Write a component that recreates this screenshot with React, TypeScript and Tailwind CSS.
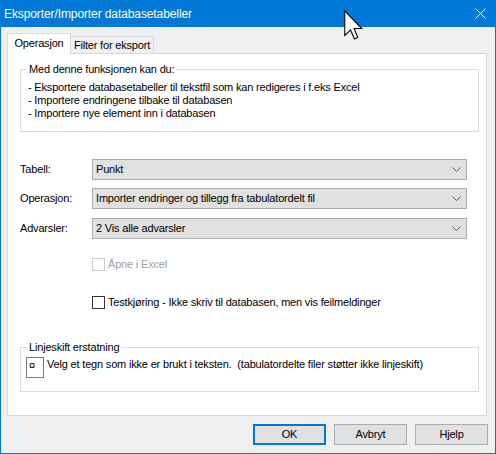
import React from "react";

function Chevron() {
  return (
    <svg width="9" height="6" viewBox="0 0 9 6" className="mr-[5px] shrink-0">
      <path d="M0.5 0.5 L4.5 4.5 L8.5 0.5" fill="none" stroke="#606060" strokeWidth="1" />
    </svg>
  );
}

function Combo({ label, value, className }: { label: string; value: string; className?: string }) {
  return (
    <div className={"flex items-center " + (className ?? "")}>
      <div className="ml-[12px] w-[72px]">{label}</div>
      <div className="w-[375px] h-[21px] bg-[#e1e1e1] border border-[#adadad] flex items-center">
        <span className="pl-[3px] flex-1">{value}</span>
        <Chevron />
      </div>
    </div>
  );
}

export default function App() {
  return (
    <div className="relative w-[496px] h-[454px] bg-[#0078d7] overflow-hidden font-['Liberation_Sans',Arial,sans-serif] text-[11px] leading-[13px] tracking-[-0.18px] text-black">
      {/* Title bar */}
      <div className="h-[27px] flex items-center pl-[4px] pr-[10px] text-white tracking-normal">
        <span className="text-[12px] leading-[16px] tracking-[-0.1px]">Eksporter/Importer databasetabeller</span>
        <svg width="11" height="11" viewBox="0 0 11 11" className="ml-auto">
          <path d="M0.5 0.5 L10.5 10.5 M10.5 0.5 L0.5 10.5" stroke="#ffffff" strokeWidth="1" />
        </svg>
      </div>

      {/* Client area */}
      <div className="mx-[1px] h-[426px] bg-[#f0f0f0] flex flex-col">
        {/* Tabs */}
        <div className="mt-[6px] ml-[6px] h-[20px] flex items-end">
          <div className="relative z-10 -mb-px w-[64px] h-[21px] bg-white border border-b-0 border-[#d9d9d9] flex items-center justify-center pb-[1px]">
            Operasjon
          </div>
          <div className="w-[83px] h-[17px] bg-[#f0f0f0] border border-l-0 border-b-0 border-[#d9d9d9] flex items-center justify-center">
            Filter for eksport
          </div>
        </div>

        {/* Tab page */}
        <div className="ml-[6px] w-[480px] h-[363px] bg-white border border-[#d9d9d9] flex flex-col">
          <fieldset className="mt-[9px] ml-[12px] w-[459px] h-[69px] border border-[#dcdcdc]">
            <legend className="ml-[6px] px-[2px] leading-[13px]">Med denne funksjonen kan du:</legend>
            <div className="pt-[5px] pl-[7px]">
              <div>- Eksportere databasetabeller til tekstfil som kan redigeres i f.eks Excel</div>
              <div>- Importere endringene tilbake til databasen</div>
              <div>- Importere nye element inn i databasen</div>
            </div>
          </fieldset>

          <Combo className="mt-[27px]" label="Tabell:" value="Punkt" />
          <Combo className="mt-[8px]" label="Operasjon:" value="Importer endringer og tillegg fra tabulatordelt fil" />
          <Combo className="mt-[9px]" label="Advarsler:" value="2 Vis alle advarsler" />

          <div className="mt-[19px] ml-[84px] flex items-center h-[13px]">
            <div className="w-[13px] h-[13px] border border-[#cccccc] bg-white" />
            <span className="ml-[3px] text-[#a0a0a0]">Åpne i Excel</span>
          </div>

          <div className="mt-[25px] ml-[84px] flex items-center h-[13px]">
            <div className="w-[13px] h-[13px] border border-[#333333] bg-white" />
            <span className="ml-[3px]">Testkjøring - Ikke skriv til databasen, men vis feilmeldinger</span>
          </div>

          <fieldset className="mt-[32px] ml-[12px] w-[459px] h-[51px] border border-[#dcdcdc]">
            <legend className="ml-[6px] px-[2px] leading-[13px]">Linjeskift erstatning</legend>
            <div className="mt-[3px] pl-[5px] flex items-start">
              <div className="w-[18px] h-[21px] border border-[#7a7a7a] bg-white text-[11px] leading-[13px] pl-[2px] pt-[1px]">¤</div>
              <span className="ml-[3px] mt-[1px] whitespace-pre">Velg et tegn som ikke er brukt i teksten.  (tabulatordelte filer støtter ikke linjeskift)</span>
            </div>
          </fieldset>
        </div>

        {/* Buttons */}
        <div className="mt-[8px] pr-[7px] flex justify-end gap-[8px]">
          <button className="w-[73px] h-[21px] bg-[#e1e1e1] border-2 border-[#0078d7] flex items-center justify-center">OK</button>
          <button className="w-[73px] h-[21px] bg-[#e1e1e1] border border-[#adadad] flex items-center justify-center">Avbryt</button>
          <button className="w-[73px] h-[21px] bg-[#e1e1e1] border border-[#adadad] flex items-center justify-center">Hjelp</button>
        </div>
      </div>

      {/* Mouse cursor overlay */}
      <svg width="19" height="31" viewBox="0 0 12.4 20" className="absolute left-[344px] top-[10px]">
        <path d="M0.5 0.5 L0.5 16.5 L4.3 12.9 L6.8 18.8 L9 17.8 L6.6 12 L11.6 12 Z" fill="#ffffff" stroke="#000000" strokeWidth="0.7" strokeLinejoin="miter" />
      </svg>
    </div>
  );
}
